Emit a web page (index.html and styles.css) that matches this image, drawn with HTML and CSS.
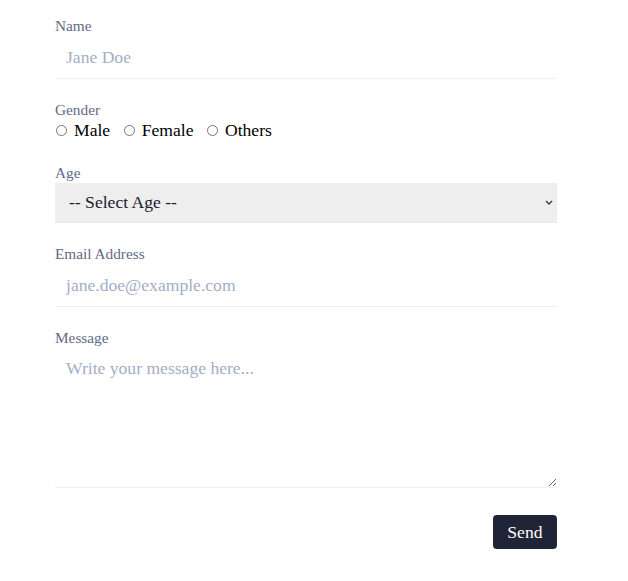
FILE: index.html
```html
<!DOCTYPE html>
<html>
<head>
<meta charset="utf-8">
<link rel="stylesheet" href="styles.css">
</head>
<body>
<form class="form">
  <div class="field">
    <label class="label" for="name">Name</label>
    <input class="input" id="name" type="text" placeholder="Jane Doe">
  </div>
  <div class="field">
    <span class="label">Gender</span>
    <div class="radios">
      <label class="radio"><input type="radio" name="g"> Male</label>
      <label class="radio"><input type="radio" name="g"> Female</label>
      <label class="radio"><input type="radio" name="g"> Others</label>
    </div>
  </div>
  <div class="field">
    <label class="label" for="age">Age</label>
    <select class="select" id="age">
      <option>-- Select Age --</option>
    </select>
  </div>
  <div class="field">
    <label class="label" for="email">Email Address</label>
    <input class="input" id="email" type="email" placeholder="jane.doe@example.com">
  </div>
  <div class="field">
    <label class="label" for="msg">Message</label>
    <textarea class="textarea" id="msg" placeholder="Write your message here..."></textarea>
  </div>
  <div class="actions">
    <button class="button" type="button">Send</button>
  </div>
</form>
</body>
</html>
```
FILE: styles.css
```css
html, body {
  margin: 0;
  padding: 0;
  background: #fff;
}
body {
  font-family: "Liberation Serif", serif;
}
.form {
  width: 502px;
  margin-left: 55px;
  padding-top: 16px;
  display: flex;
  flex-direction: column;
  gap: 21px;
}
.field {
  display: flex;
  flex-direction: column;
}
.label {
  font-size: 15.3px;
  line-height: 20px;
  height: 20px;
  color: #5f6b85;
}
.input {
  height: 41px;
  margin-top: 2px;
  box-sizing: border-box;
  border: none;
  border-bottom: 1px solid #eef0f5;
  padding: 0 11px 2px;
  font-family: inherit;
  font-size: 17.6px;
  color: #1a202c;
  outline: none;
}
.input::placeholder, .textarea::placeholder {
  color: #a3aec6;
}
.radios {
  display: flex;
  gap: 12.5px;
  height: 22px;
  padding-bottom: 2px;
  box-sizing: border-box;
  align-items: center;
}
.radio {
  display: flex;
  align-items: center;
  font-size: 17.6px;
  line-height: 20px;
  color: #000;
}
.radio input {
  margin: 0 7px 0 1px;
  width: 11px;
  height: 11px;
}
.select {
  appearance: none;
  -webkit-appearance: none;
  height: 40px;
  box-sizing: border-box;
  background: #eeeeee url("data:image/svg+xml,%3Csvg xmlns='http://www.w3.org/2000/svg' width='8' height='5' viewBox='0 0 8 5'%3E%3Cpath d='M1 1l3 3 3-3' fill='none' stroke='%23333a4d' stroke-width='1.4'/%3E%3C/svg%3E") no-repeat right 4px center;
  border: none;
  border-bottom: 1px solid #e6e8ee;
  border-radius: 0;
  padding: 0 14px 2px;
  font-family: inherit;
  font-size: 17.6px;
  color: #1a202c;
  outline: none;
}
.textarea {
  margin-top: 2px;
  height: 138px;
  box-sizing: border-box;
  border: none;
  border-bottom: 1px solid #eef0f5;
  padding: 8px 11px;
  font-family: inherit;
  font-size: 17.6px;
  outline: none;
  resize: vertical;
}
.actions {
  display: flex;
  justify-content: flex-end;
  margin-top: 6px;
}
.button {
  height: 34px;
  padding: 0 14.5px;
  background: #1f2437;
  color: #fff;
  border: none;
  border-radius: 4px;
  font-family: inherit;
  font-size: 17.6px;
}
```
